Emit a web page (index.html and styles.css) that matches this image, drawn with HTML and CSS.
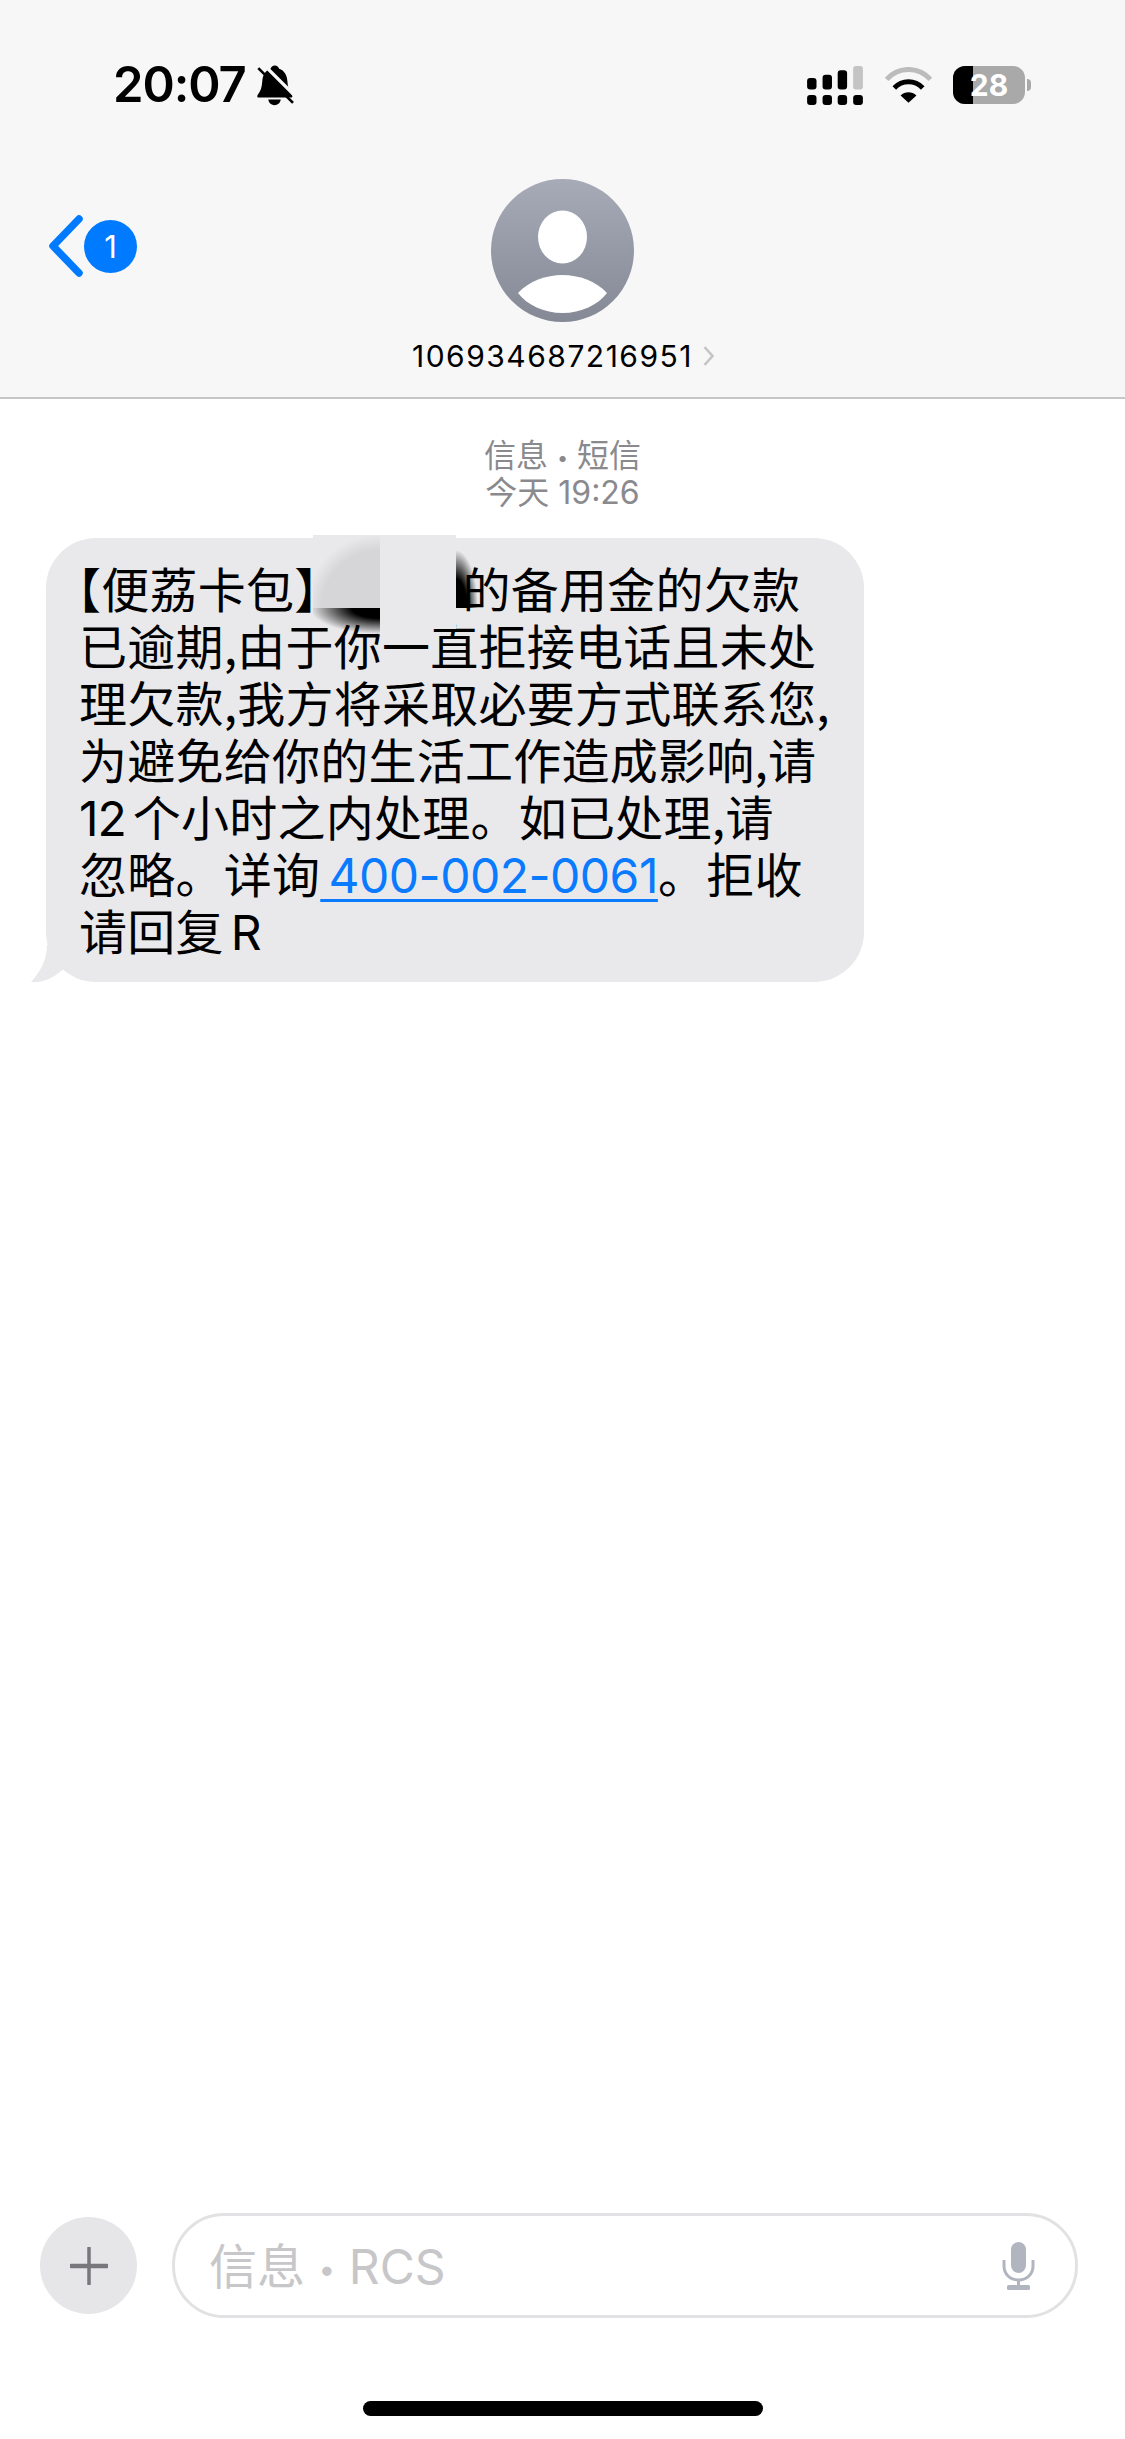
FILE: index.html
```html
<!DOCTYPE html>
<html lang="zh-CN">
<head>
<meta charset="utf-8">
<title>信息</title>
<link rel="stylesheet" href="styles.css">
</head>
<body>
<div class="screen">
  <header class="header">
    <div class="status">
      <div class="status-left">
        <span class="time">20:07</span>
        <svg class="bell" viewBox="498 68 118 126"><path d="M555 72c-7 0-11 5-13 10-16 5-24 20-25 38-1 18-5 30-14 41-3 4-1 8 4 8h96c5 0 7-4 4-8-9-11-13-23-14-41-1-18-9-33-25-38-2-5-6-10-13-10z" fill="#000"/><path d="M535 175c2 11 10 17 19 17s17-6 19-17z" fill="#000"/><path d="M514 62l108 108" stroke="#f7f7f7" stroke-width="10" fill="none"/><path d="M505 80l105 105" stroke="#000" stroke-width="8" fill="none"/></svg>
      </div>
      <div class="status-right">
        <svg class="signal" viewBox="82 72 166 116"><g fill="#000"><rect x="82" y="108" width="28" height="34" rx="9"/><rect x="128" y="98" width="28" height="44" rx="9"/><rect x="173" y="85" width="28" height="57" rx="9"/><rect x="82" y="158" width="28" height="30" rx="9"/><rect x="128" y="158" width="28" height="30" rx="9"/><rect x="173" y="158" width="28" height="30" rx="9"/><rect x="219" y="158" width="29" height="30" rx="9"/></g><rect x="219" y="72" width="29" height="70" rx="8" fill="#c4c4c4"/></svg>
        <svg class="wifi" viewBox="313 76 142 108"><path d="M318 113c36-40 96-40 132 0" fill="none" stroke="#bcbcbc" stroke-width="15"/><path d="M341 139c24-25 62-25 86 0" fill="none" stroke="#000" stroke-width="15"/><path d="M360 162c14-13 34-13 48 0l-24 22z" fill="#000"/></svg>
        <div class="battery"><div class="battery-body"><span class="battery-fill"></span><span class="battery-num">28</span></div><span class="battery-nub"></span></div>
      </div>
    </div>
    <div class="nav">
      <div class="back">
        <svg class="chevron" viewBox="0 0 36 62"><path d="M31 4L5 31l26 27" fill="none" stroke="#007aff" stroke-width="7.5" stroke-linecap="round" stroke-linejoin="round"/></svg>
        <span class="badge">1</span>
      </div>
      <div class="contact">
        <svg class="avatar" viewBox="0 0 143 143"><defs><linearGradient id="av" x1="0" y1="0" x2="0" y2="1"><stop offset="0" stop-color="#a7abb7"/><stop offset="1" stop-color="#858995"/></linearGradient></defs><circle cx="71.5" cy="71.5" r="71.5" fill="url(#av)"/><ellipse cx="71.5" cy="58" rx="24.5" ry="26.5" fill="#fff"/><path d="M27 114C38 102 55 96 71.5 96S105 102 116 114C107 126 90 134 71.5 134S36 126 27 114Z" fill="#fff"/></svg>
        <div class="name"><span>106934687216951</span><svg class="name-chevron" viewBox="0 0 12 22"><path d="M2 2l8 9-8 9" fill="none" stroke="#c4c4c6" stroke-width="2.6"/></svg></div>
      </div>
      <div></div>
    </div>
  </header>

  <main class="messages">
    <div class="stamp">信息 <span class="dot">•</span> 短信<br>今天 19:26</div>
    <div class="bubble">
      <p class="bubble-text"><span class="br-open">【</span>便荔卡包<span class="br-close">】</span><span class="hidden-gap"></span>的备用金的欠款<br>已逾期,由于你一直拒接电话且未处<br>理欠款,我方将采取必要方式联系您,<br>为避免给你的生活工作造成影响,请<br><span class="num">12</span> 个小时之内处理。如已处理,请<br>忽略。详询<a class="link">&#8201;400-002-0061</a>。拒收<br>请回复 <span class="num">R</span></p>
      <div class="redact-left"></div>
      <div class="redact-right"></div>
      <div class="smear-bottom"></div>
      <div class="smear-right"></div>
      <svg class="tail" viewBox="0 0 40 40"><path d="M16 0C16 14 10 26 0 37C12 38 22 33 30 26L40 20V0Z" fill="#e9e9eb"/></svg>
    </div>
  </main>

  <footer class="composer">
    <div class="plus"><svg class="plus-icon" viewBox="0 0 38 38"><path d="M19 1v36" stroke="#77777c" stroke-width="3.5" stroke-linecap="round"/><path d="M1 19h36" stroke="#77777c" stroke-width="4.500" stroke-linecap="round"/></svg></div>
    <div class="field">
      <span class="placeholder">信息 <span class="dot">•</span> RCS</span>
      <svg class="mic" viewBox="0 0 33 48"><rect x="9" y="0" width="15" height="31" rx="7.5" fill="#b1b5bf"/><path d="M2 18v6c0 8 6 14 14.500 14S31 32 31 24v-6" fill="none" stroke="#b1b5bf" stroke-width="3"/><path d="M16.500 38v6" stroke="#b1b5bf" stroke-width="3"/><rect x="5" y="43" width="23" height="5" rx="1.500" fill="#b1b5bf"/></svg>
    </div>
  </footer>
  <div class="home"></div>
</div>
</body>
</html>
```
FILE: styles.css
```css
* { box-sizing: border-box; }
html, body { margin: 0; padding: 0; background: #fff; }
body { font-family: Inter, "Noto Sans CJK SC", sans-serif; color: #000; }
.screen { width: 1125px; height: 2439px; display: flex; flex-direction: column; overflow: hidden; }

.header { height: 399px; background: #f7f7f7; border-bottom: 2px solid #c6c6c8; padding-top: 65px; display: flex; flex-direction: column; }
.status { height: 40px; padding: 0 94px 0 113px; display: flex; justify-content: space-between; align-items: center; }
.status-left { display: flex; align-items: center; gap: 9px; }
.time { font-size: 49px; font-weight: 600; line-height: 40px; letter-spacing: -1.1px; }
.bell { width: 39px; height: 42px; margin-left: 1px; }
.status-right { display: flex; align-items: center; }
.signal { width: 56px; height: 39px; }
.wifi { width: 47px; height: 36px; margin-left: 22px; }
.battery { display: flex; align-items: center; margin-left: 21px; gap: 2px; }
.battery-body { position: relative; width: 72px; height: 38px; border-radius: 12px; background: #a9a9a9; overflow: hidden; display: flex; align-items: center; justify-content: center; }
.battery-fill { position: absolute; left: 0; top: 0; bottom: 0; width: 20px; background: #000; }
.battery-num { position: relative; color: #fff; font-size: 30px; font-weight: 700; line-height: 38px; }
.battery-nub { width: 4px; height: 12px; background: #a9a9a9; border-radius: 0 6px 6px 0; }

.nav { display: grid; grid-template-columns: 1fr auto 1fr; padding-top: 74px; }
.back { display: flex; align-items: center; height: 62px; margin-top: 36px; padding-left: 48px; }
.chevron { width: 36px; height: 62px; }
.badge { width: 53px; height: 53px; border-radius: 50%; background: #007aff; color: #fff; font-size: 31px; line-height: 53px; text-align: center; }
.contact { display: flex; flex-direction: column; align-items: center; }
.avatar { width: 143px; height: 143px; display: block; }
.name { display: flex; align-items: center; gap: 9px; margin-top: 18px; height: 32px; font-size: 30px; line-height: 32px; letter-spacing: 1.5px; margin-right: -2px; }
.name-chevron { width: 13px; height: 22px; }

.messages { padding-top: 38px; }
.stamp { text-align: center; font-size: 32px; line-height: 37px; color: #8a8a8e; }
.dot { font-size: 0.62em; line-height: 0; vertical-align: 0.12em; }
.bubble { position: relative; width: 818px; margin: 27px 0 0 46px; padding: 21px 0 24px 33px; background: #e9e9eb; border-radius: 50px; }
.bubble-text { margin: 0; font-size: 48px; line-height: 57px; letter-spacing: 0.25px; word-spacing: -4px; white-space: nowrap; font-family: "Noto Sans CJK SC", sans-serif; }
.num { font-family: Inter, sans-serif; letter-spacing: -1px; line-height: 0; }
.link { font-family: Inter, sans-serif; color: #0a7aff; line-height: 0; text-decoration: underline; text-decoration-thickness: 3px; text-underline-offset: 6px; letter-spacing: -0.5px; }
.br-open { margin-left: -26px; }
.br-close { margin-right: -20px; }
.hidden-gap { display: inline-block; width: 140px; }

.redact-left { position: absolute; left: 267px; top: -3px; width: 67px; height: 73px; background: radial-gradient(circle at 100% 100%, #d6d6d8 58px, #e9e9eb 74px); }
.redact-right { position: absolute; left: 334px; top: -3px; width: 76px; height: 94px; background: #e9e9eb; }
.smear-bottom { position: absolute; left: 267px; top: 70px; width: 67px; height: 26px; background: radial-gradient(ellipse 70px 26px at 100% 0, #000 40%, rgba(0,0,0,0) 100%); }
.smear-right { position: absolute; left: 410px; top: 12px; width: 22px; height: 58px; background: radial-gradient(ellipse 22px 58px at 0 100%, #000 50%, rgba(0,0,0,0) 100%); }
.tail { position: absolute; left: -15px; bottom: -3px; width: 40px; height: 40px; }

.composer { margin-top: auto; display: flex; align-items: center; height: 105px; padding: 0 47px 0 40px; gap: 35px; }
.plus { width: 97px; height: 97px; flex: none; border-radius: 50%; background: #e6e6e8; display: flex; align-items: center; justify-content: center; }
.plus-icon { width: 38px; height: 38px; }
.field { flex: 1; height: 105px; border: 3px solid #e2e2e4; border-radius: 52px; display: flex; align-items: center; justify-content: space-between; padding: 0 40px 0 34px; }
.placeholder { font-size: 48px; color: #c7c7c9; line-height: 50px; padding-top: 3px; font-family: Inter, "Noto Sans CJK SC", sans-serif; }
.mic { width: 33px; height: 48px; }
.home { width: 400px; height: 15px; border-radius: 8px; background: #000; margin: 83px auto 23px; }
```
